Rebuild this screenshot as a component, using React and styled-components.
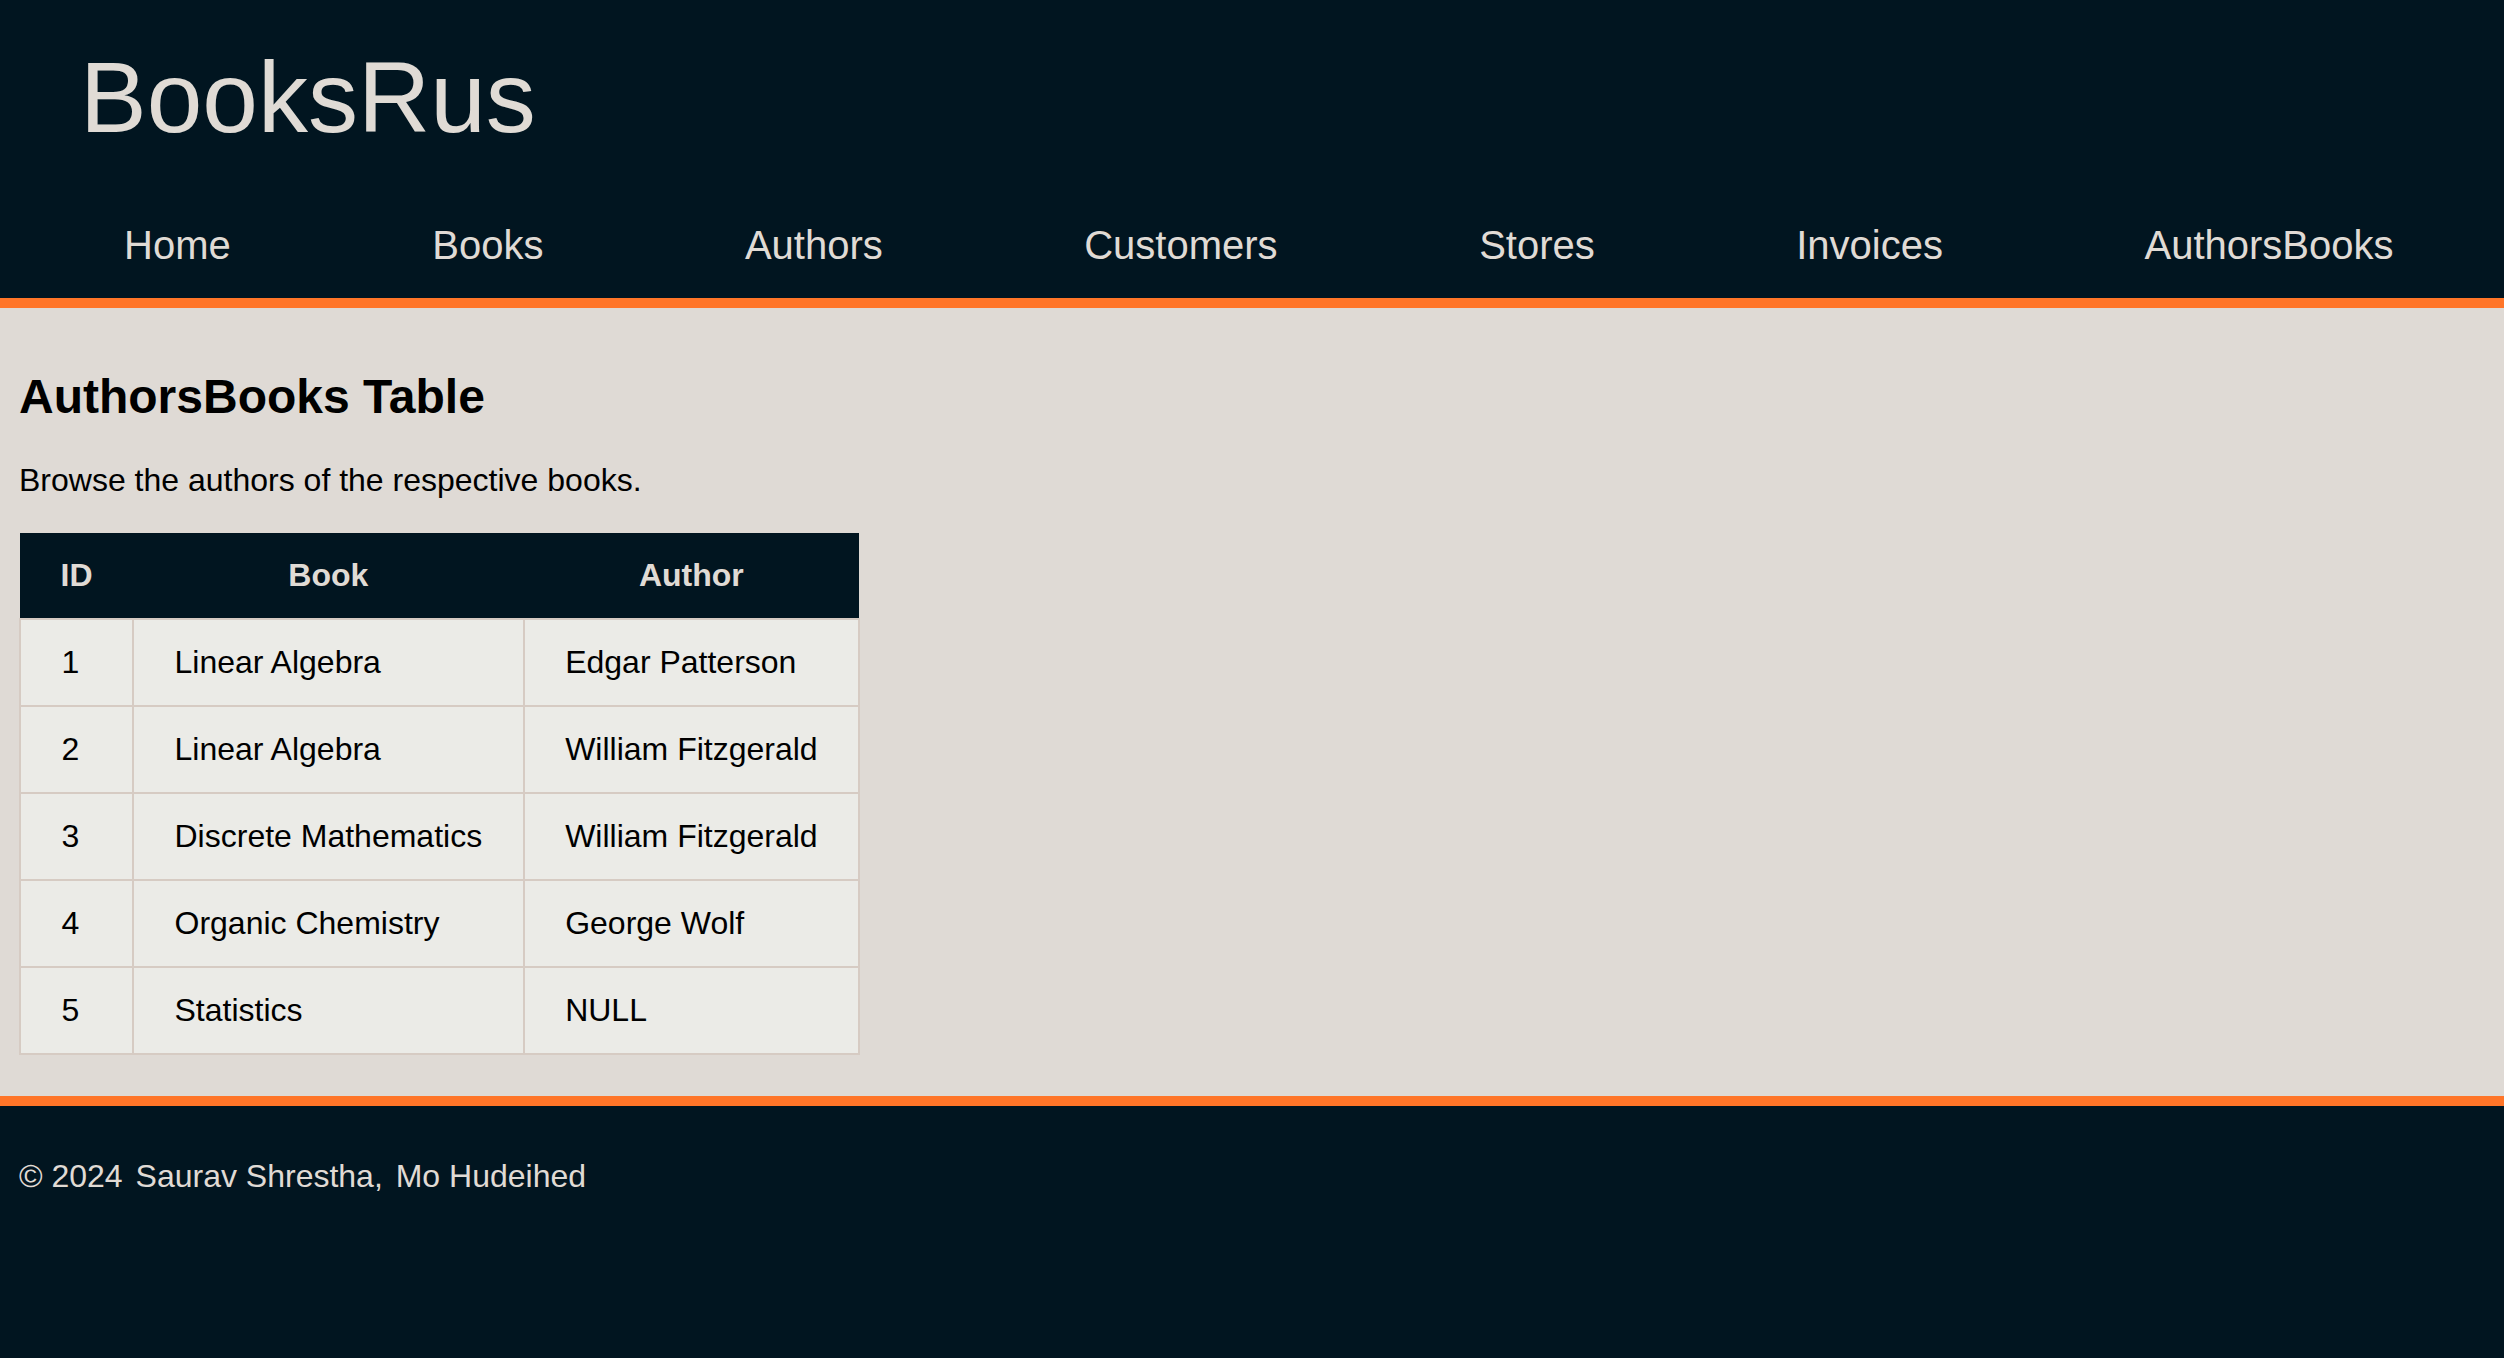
import React from 'react';
import styled, { createGlobalStyle } from 'styled-components';

const GlobalStyle = createGlobalStyle`
  html, body {
    margin: 0;
    padding: 0;
    background: #011520;
    font-family: "Liberation Sans", Arial, Helvetica, sans-serif;
  }
`;

const Header = styled.header`
  background: #011520;
  color: #e0dbd5;
  padding: 40px 0 30px;
  border-bottom: 10px solid #ff7528;
`;

const Title = styled.h1`
  margin: 0;
  padding-left: 80px;
  font-size: 100px;
  font-weight: 400;
  line-height: normal;
`;

const Nav = styled.nav`
  display: flex;
  gap: 201.5px;
  margin-top: 68px;
  padding-left: 124px;
`;

const NavLink = styled.a`
  color: #e0dbd5;
  font-size: 40px;
  text-decoration: none;
  cursor: pointer;
`;

const Main = styled.main`
  background: #dfdad5;
  padding: 61px 19px 41px;
`;

const H2 = styled.h2`
  margin: 0 0 38px;
  font-size: 48px;
  font-weight: 700;
  line-height: normal;
  color: #000;
`;

const Intro = styled.p`
  margin: 0 0 34px;
  font-size: 32px;
  color: #000;
`;

const Table = styled.table`
  border-collapse: collapse;
  font-size: 32px;
`;

const Th = styled.th`
  background: #011520;
  color: #e0dbd5;
  font-weight: 700;
  padding: 24px 40.5px;
  text-align: center;
`;

const Td = styled.td`
  background: #ebebe7;
  color: #000;
  padding: 24px 40.5px;
  border: 2px solid #d6cbc3;
  text-align: left;
`;

const Footer = styled.footer`
  background: #011520;
  color: #e0dbd5;
  border-top: 10px solid #ff7528;
  padding: 52px 19px 140px;
  font-size: 32px;
`;

const Name = styled.span`
  margin-left: 4px;
`;

const links = ['Home', 'Books', 'Authors', 'Customers', 'Stores', 'Invoices', 'AuthorsBooks'];

const rows = [
  { id: 1, book: 'Linear Algebra', author: 'Edgar Patterson' },
  { id: 2, book: 'Linear Algebra', author: 'William Fitzgerald' },
  { id: 3, book: 'Discrete Mathematics', author: 'William Fitzgerald' },
  { id: 4, book: 'Organic Chemistry', author: 'George Wolf' },
  { id: 5, book: 'Statistics', author: 'NULL' },
];

export default function App() {
  return (
    <>
      <GlobalStyle />
      <Header>
        <Title>BooksRus</Title>
        <Nav>
          {links.map((l) => (
            <NavLink key={l}>{l}</NavLink>
          ))}
        </Nav>
      </Header>
      <Main>
        <H2>AuthorsBooks Table</H2>
        <Intro>Browse the authors of the respective books.</Intro>
        <Table>
          <thead>
            <tr>
              <Th>ID</Th>
              <Th>Book</Th>
              <Th>Author</Th>
            </tr>
          </thead>
          <tbody>
            {rows.map((r) => (
              <tr key={r.id}>
                <Td>{r.id}</Td>
                <Td>{r.book}</Td>
                <Td>{r.author}</Td>
              </tr>
            ))}
          </tbody>
        </Table>
      </Main>
      <Footer>
        © 2024 <Name>Saurav Shrestha,</Name> <Name>Mo Hudeihed</Name>
      </Footer>
    </>
  );
}
